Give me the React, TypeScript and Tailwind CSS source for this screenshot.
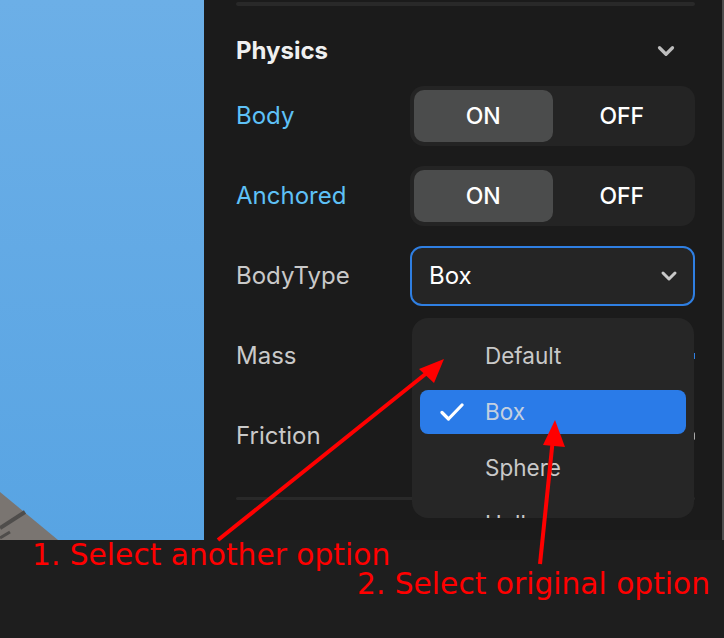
import { ChevronDown } from "lucide-react";

const rowLabel = "text-[24px] leading-none";

const Toggle = () => (
    <div className="w-[285px] h-[60px] rounded-[14px] bg-[#242424] p-[4px] flex">
        <div className="flex-1 rounded-[10px] bg-[#4b4c4c] flex items-center justify-center text-[23px] font-medium text-white">
            ON
        </div>
        <div className="flex-1 flex items-center justify-center text-[23px] font-medium text-white">OFF</div>
    </div>
);

const menuItems = ["Default", "Box", "Sphere", "Hull"];

const App = () => {
    return (
        <div className="relative w-[724px] h-[638px] overflow-hidden bg-[#1e1e1e] font-['Inter',sans-serif]">
            <div className="flex h-[540px]">
                {/* 3d viewport */}
                <div className="relative w-[204px] bg-gradient-to-b from-[#6cafe7] to-[#58a4e3]">
                    <svg className="absolute left-0 bottom-0" width="60" height="50" viewBox="0 0 60 50">
                        <polygon points="0,2 0,50 58,50" fill="#7a7571" />
                        <polyline points="0,38 25,22" stroke="#4f4d4b" strokeWidth="4" fill="none" />
                        <polyline points="0,48 10,42" stroke="#4f4d4b" strokeWidth="3" fill="none" />
                    </svg>
                </div>

                {/* properties panel */}
                <div className="flex-1 bg-[#1b1b1b] border-r-2 border-[#4d4d4d] pl-8 pr-[27px]">
                    <div className="mt-0.5 h-1 rounded bg-[#292929]" />
                    <div className="mt-[31px] mb-[21px] h-[28px] flex items-center justify-between">
                        <h2 className="text-[24px] font-bold text-[#f0f0f0]">Physics</h2>
                        <ChevronDown className="mr-[16px] h-[26px] w-[26px] text-[#bdbdbd]" strokeWidth={3} />
                    </div>

                    <div className="flex flex-col gap-5">
                        <div className="h-[60px] flex items-center justify-between">
                            <span className={`${rowLabel} text-[#5ec1f7]`}>Body</span>
                            <Toggle />
                        </div>
                        <div className="h-[60px] flex items-center justify-between">
                            <span className={`${rowLabel} text-[#5ec1f7]`}>Anchored</span>
                            <Toggle />
                        </div>
                        <div className="h-[60px] flex items-center justify-between">
                            <span className={`${rowLabel} text-[#c9c9c9]`}>BodyType</span>
                            <div className="w-[285px] h-[60px] rounded-[12px] border-2 border-[#2f7fe2] bg-[#252525] flex items-center justify-between pl-[17px] pr-[12px]">
                                <span className="text-[24px] text-white">Box</span>
                                <ChevronDown className="h-[24px] w-[24px] text-[#c9c9c9]" strokeWidth={3} />
                            </div>
                        </div>
                        <div className="h-[60px] flex items-center justify-between">
                            <span className={`${rowLabel} text-[#c9c9c9]`}>Mass</span>
                            <div className="w-[285px] h-[60px] flex items-center justify-end">
                                <div className="h-[6px] w-[3px] bg-[#2f7fe2]" />
                            </div>
                        </div>
                        <div className="h-[60px] flex items-center justify-between">
                            <span className={`${rowLabel} text-[#c9c9c9]`}>Friction</span>
                            <div className="w-[285px] h-[60px] flex items-center justify-end">
                                <div className="h-[8px] w-[3px] rounded-full bg-[#aaaaaa]" />
                            </div>
                        </div>
                    </div>

                    <div className="mt-[31px] h-[3px] rounded bg-[#292929]" />
                </div>
            </div>

            {/* annotations */}
            <p className="mt-px pl-[32px] font-['DejaVu_Sans',sans-serif] text-[29.7px] leading-[27px] text-[#ff0000]">
                1. Select another option
            </p>
            <p className="mt-[2px] pl-[357px] font-['DejaVu_Sans',sans-serif] text-[29.7px] leading-[27px] text-[#ff0000]">
                2. Select original option
            </p>

            {/* open select menu */}
            <div className="absolute left-[412px] top-[318px] w-[282px] h-[200px] overflow-hidden rounded-2xl bg-[#262626] px-2 pt-[10px]">
                {menuItems.map((item) => (
                    <div key={item} className="h-[56px] py-[6px]">
                        <div
                            className={
                                item === "Box"
                                    ? "h-[44px] rounded-lg bg-[#2a7be8] flex items-center pl-5"
                                    : "h-[44px] flex items-center pl-5"
                            }
                        >
                            <div className="w-[45px]">
                                {item === "Box" && (
                                    <svg width="24" height="20" viewBox="0 0 24 20" fill="none">
                                        <path d="M2 10.5L8.5 17L22 3" stroke="white" strokeWidth="3.2" strokeLinecap="round" strokeLinejoin="round" />
                                    </svg>
                                )}
                            </div>
                            <span className={item === "Box" ? "text-[22.5px] text-[#c3d0e0]" : "text-[22.5px] text-[#c9c9c9]"}>
                                {item}
                            </span>
                        </div>
                    </div>
                ))}
            </div>

            {/* red arrows */}
            <svg className="pointer-events-none absolute left-0 top-0" width="724" height="638">
                <line x1="218" y1="540" x2="428" y2="372" stroke="#ff0000" strokeWidth="4" />
                <polygon points="444,359 419,369 434,383" fill="#ff0000" />
                <line x1="540" y1="564" x2="553" y2="438" stroke="#ff0000" strokeWidth="4" />
                <polygon points="555,420 543,445 565,447" fill="#ff0000" />
            </svg>
        </div>
    );
};

export default App;
